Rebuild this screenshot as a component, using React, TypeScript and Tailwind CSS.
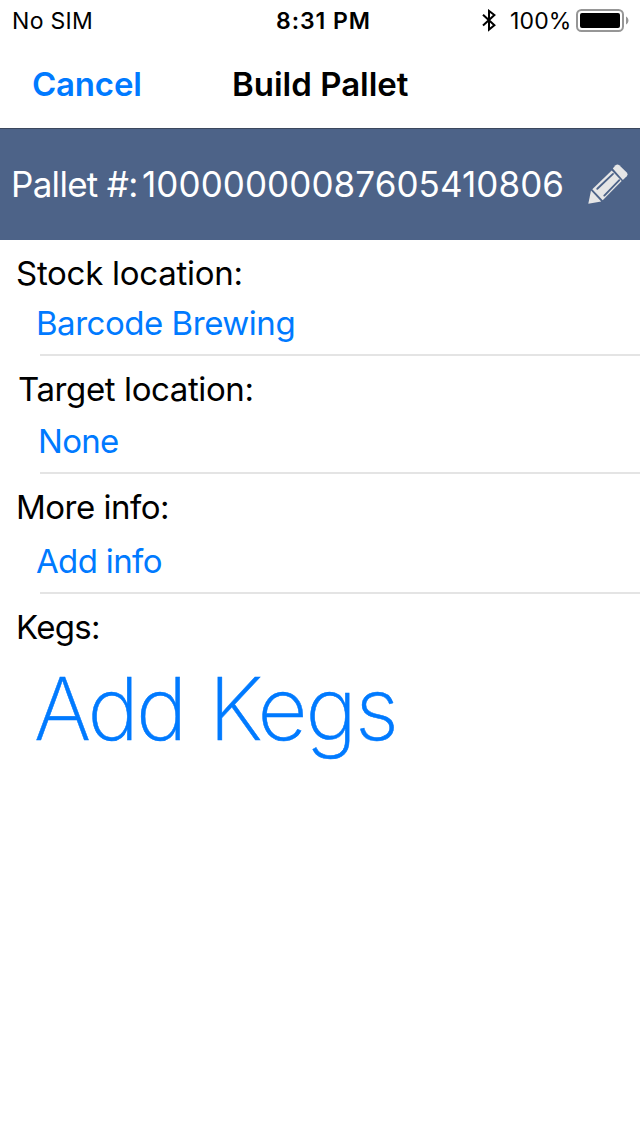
import React from "react";

type FieldProps = {
  label: string;
  value: string;
  className: string;
  labelClass: string;
  valueClass: string;
};

function Field({ label, value, className, labelClass, valueClass }: FieldProps) {
  return (
    <section className={`flex shrink-0 flex-col pt-[13px] ${className}`}>
      <h2 className={`h-10 whitespace-nowrap text-[33px] leading-10 text-black ${labelClass}`}>{label}</h2>
      <button className={`h-10 whitespace-nowrap text-left text-[33px] leading-10 text-[#007aff] ${valueClass}`}>
        {value}
      </button>
      <div className="mt-auto ml-10 h-0.5 shrink-0 bg-[#e4e4e4]" />
    </section>
  );
}

function Bluetooth() {
  return (
    <svg className="ml-auto h-6 w-4" viewBox="0 0 16 24" fill="none" stroke="#000" strokeWidth="2">
      <path d="M2 5.7 L13.4 16.3 L8 20.6 V1.9 L13.4 6 L2 16.5" />
    </svg>
  );
}

function Battery() {
  return (
    <svg className="h-6 w-[54px]" viewBox="0 0 54 24">
      <rect x="1" y="1" width="46" height="21" rx="4.5" fill="#fff" stroke="#969696" strokeWidth="2" />
      <rect x="4" y="4" width="40" height="15" rx="2" fill="#000" />
      <path d="M50 7.5 C53.3 9.5 53.3 13.5 50 15.5 Z" fill="#969696" />
    </svg>
  );
}

function Pencil() {
  return (
    <svg className="h-[42px] w-[42px]" viewBox="0 0 42 42" fill="#e6e6e6">
      <path d="M3 26.5 L13.2 37.4 L0.3 39.7 Z" />
      <path d="M4.3 25.2 L23.7 6.5 L33.7 16.9 L14.7 36.2 Z" />
      <path d="M24.8 4.4 L27.6 1.3 Q29.4 -0.3 31.3 1.3 L38.8 8.4 Q40.3 10.2 38.7 12.2 L34.9 16 Z" />
      <path d="M9.3 24.8 L25 9.9 M16.3 31.6 L31.3 16.2" fill="none" stroke="#4d6388" strokeWidth="1.9" strokeLinecap="round" />
    </svg>
  );
}

export default function App() {
  return (
    <main className="flex h-[1136px] w-[640px] flex-col overflow-hidden bg-white font-['Inter',sans-serif]">
      <header className="flex h-[129px] shrink-0 flex-col border-b border-[#3b475d]">
        <div className="flex h-10 shrink-0 items-center pt-0.5 text-[23px]">
          <span className="w-[276px] pl-3 tracking-[0.3px]">No SIM</span>
          <span className="font-semibold tracking-[0.95px]">8:31 PM</span>
          <Bluetooth />
          <span className="w-[79px] pl-[13px] tracking-[0.15px]">100%</span>
          <Battery />
          <span className="w-[10px]" />
        </div>
        <nav className="flex h-[88px] items-center pt-0.5 text-[33px] font-semibold">
          <button className="w-[232px] pl-8 text-left tracking-[-0.2px] text-[#007aff]">Cancel</button>
          <h1>Build Pallet</h1>
        </nav>
      </header>
      <div className="flex h-[111px] shrink-0 items-center bg-[#4d6388] pl-[11px] text-[35px] text-white">
        <span className="w-[131px] whitespace-nowrap tracking-[-0.7px]">Pallet #:</span>
        <span className="w-[446px] whitespace-nowrap tracking-[0.08px]">10000000087605410806</span>
        <Pencil />
      </div>
      <Field
        label="Stock location:"
        value="Barcode Brewing"
        className="h-[116px]"
        labelClass="pl-4 tracking-[-0.27px]"
        valueClass="mt-2.5 pl-9 tracking-[-0.47px]"
      />
      <Field
        label="Target location:"
        value="None"
        className="h-[118px]"
        labelClass="pl-[18px] tracking-[-0.4px]"
        valueClass="mt-3 pl-[38px] tracking-[-0.7px]"
      />
      <Field
        label="More info:"
        value="Add info"
        className="h-[120px]"
        labelClass="pl-4 tracking-[-0.5px]"
        valueClass="mt-3.5 pl-9 tracking-[-0.65px]"
      />
      <section className="flex flex-col pt-[13px]">
        <h2 className="h-10 pl-4 text-[33px] leading-10 tracking-[-0.7px]">Kegs:</h2>
        <button className="mt-[9px] flex h-[106px] gap-[24px] pl-[34px] text-left text-[87px] leading-[106px] font-extralight text-[#007aff] [-webkit-text-stroke:0.5px_#007aff]">
          <span className="tracking-[-2.8px]">Add</span>
          <span className="tracking-[-2px]">Kegs</span>
        </button>
      </section>
    </main>
  );
}
